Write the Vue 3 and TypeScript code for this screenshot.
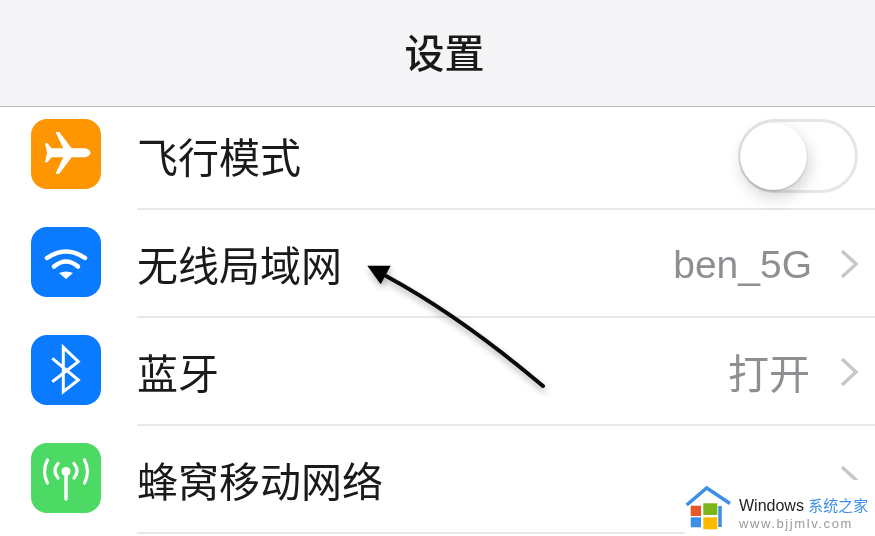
<script setup lang="ts">
interface Row {
  key: string
  label: string
  color: string
  value?: string
  cjkValue?: boolean
  chevron: boolean
  toggle?: boolean
}

const rows: Row[] = [
  { key: 'plane', label: '飞行模式', color: '#fe9503', chevron: false, toggle: true },
  { key: 'wifi', label: '无线局域网', color: '#0a7bff', value: 'ben_5G', chevron: true },
  { key: 'bluetooth', label: '蓝牙', color: '#0a7bff', value: '打开', cjkValue: true, chevron: true },
  { key: 'cell', label: '蜂窝移动网络', color: '#4cd964', chevron: true }
]
</script>

<template>
  <div class="page">
    <header class="nav">设置</header>
    <ul class="list">
      <li v-for="row in rows" :key="row.key" class="row">
        <span class="icon" :style="{ background: row.color }">
          <svg viewBox="0 0 70 70" width="70" height="70">
            <path
              v-if="row.key === 'plane'"
              fill="#fff"
              d="M59.5 33.8c0-2.6-3.5-4.5-7-4.5H40.7L28.3 13H24.5L32.3 29.3H20.7L16.5 24.3H14L16 33.8 14 43.3H16.5L20.7 38.3H32.3L24.5 54.7H28.3L40.7 38.3H52.5c3.5 0 7-1.9 7-4.5z"
            />
            <g v-else-if="row.key === 'wifi'" fill="none" stroke="#fff" stroke-width="4.5" stroke-linecap="round">
              <path d="M16 31Q35 18 54 31" />
              <path d="M23 39.5Q35 29.5 47 39.5" />
              <path d="M28 46L35 52 42 46Q35 43 28 46z" fill="#fff" stroke="none" />
            </g>
            <path
              v-else-if="row.key === 'bluetooth'"
              fill="none"
              stroke="#fff"
              stroke-width="3"
              d="M21.3 23.3L47.3 45 32.3 56.7V12.3L47.3 26.7 21.3 46.7"
            />
            <g v-else fill="none" stroke="#fff" stroke-width="3.2" stroke-linecap="round">
              <path d="M27 20.5Q21 27.5 27 35" />
              <path d="M43 20.5Q49 27.5 43 35" />
              <path d="M16.5 17Q10.5 28.5 16.5 40" />
              <path d="M53.5 17Q59.5 28.5 53.5 40" />
              <path d="M35 30V56" stroke-width="3.5" />
              <circle cx="35" cy="28.5" r="4.5" fill="#fff" stroke="none" />
            </g>
          </svg>
        </span>
        <div class="body">
          <span class="label">{{ row.label }}</span>
          <span v-if="row.value" class="value" :class="{ cjk: row.cjkValue }">{{ row.value }}</span>
          <svg v-if="row.chevron" class="chevron" viewBox="0 0 20 32" width="20" height="32">
            <path d="M3 3L17 16 3 29" fill="none" stroke="#c7c7cc" stroke-width="3.5" />
          </svg>
          <span v-if="row.toggle" class="toggle"><span class="knob"></span></span>
        </div>
      </li>
    </ul>

    <svg class="arrow" viewBox="0 0 210 150" width="210" height="150">
      <path d="M36 26Q110 66 193 136" fill="none" stroke="#0a0a0a" stroke-width="4" stroke-linecap="round" />
      <path d="M17.3 15.7H40.7L30.7 34.3z" fill="#000" />
    </svg>

    <div class="mark">
      <svg viewBox="0 0 50 50" width="50" height="50">
        <path d="M1.7 21L21.7 4 45 19.500M35 22V43" fill="none" stroke="#3d8fe6" stroke-width="3.5" />
        <rect x="5.7" y="21.7" width="10.3" height="10.3" fill="#e8572a" />
        <rect x="18.3" y="19.3" width="14" height="11.7" fill="#7cb518" />
        <rect x="5.7" y="33.3" width="10.3" height="10" fill="#3d8fe6" />
        <rect x="18.3" y="33.3" width="14" height="12" fill="#fdb900" />
      </svg>
      <div class="mark-text">
        <div class="mark-title">Windows <span>系统之家</span></div>
        <div class="mark-url">www.bjjmlv.com</div>
      </div>
    </div>
  </div>
</template>

<style>
html,
body {
  margin: 0;
  background: #fff;
}
</style>

<style scoped>
.page {
  position: relative;
  width: 875px;
  height: 536px;
  overflow: hidden;
  background: #fff;
  font-family: "Liberation Sans", "Noto Sans CJK SC", sans-serif;
  filter: blur(0.4px);
}
.nav {
  position: relative;
  z-index: 1;
  height: 102px;
  border-bottom: 1px solid #b9b9bd;
  background: #f5f5f7;
  display: flex;
  align-items: center;
  justify-content: center;
  padding: 0 0 4px 14px;
  font-size: 40px;
  font-weight: 500;
  color: #1a1a1a;
  font-family: "Noto Sans CJK SC", sans-serif;
}
.list {
  list-style: none;
  margin: -5px 0 0;
  padding: 0;
}
.row {
  display: flex;
  align-items: center;
  height: 108px;
  padding-left: 31px;
}
.icon {
  flex: none;
  width: 70px;
  height: 70px;
  border-radius: 16px;
  margin-right: 36px;
  margin-top: -4px;
}
.icon svg {
  display: block;
}
.body {
  flex: 1;
  height: 100%;
  box-sizing: border-box;
  border-bottom: 2px solid #e7e7e9;
  display: flex;
  align-items: center;
  padding-right: 16px;
}
.label {
  flex: 1;
  font-size: 41px;
  color: #1a1a1a;
  font-family: "Noto Sans CJK SC", sans-serif;
}
.value {
  font-size: 39px;
  color: #8e8e93;
  margin-right: 27px;
  margin-top: 3px;
}
.value.cjk {
  font-size: 41px;
  margin-right: 29px;
  margin-top: 0;
}
.chevron {
  margin-top: 2px;
}
.toggle {
  position: relative;
  width: 120px;
  height: 74px;
  box-sizing: border-box;
  border: 3px solid #e6e6e6;
  border-radius: 37px;
  margin-right: 1px;
  margin-top: 2px;
}
.knob {
  position: absolute;
  left: -1px;
  top: 1px;
  width: 67px;
  height: 67px;
  border-radius: 50%;
  background: #fff;
  box-shadow: 2px 7px 16px rgba(0, 0, 0, 0.18), 0 1px 2px rgba(0, 0, 0, 0.18);
}
.arrow {
  position: absolute;
  left: 350px;
  top: 250px;
  filter: drop-shadow(1px 4px 3px rgba(0, 0, 0, 0.3));
}
.mark {
  position: absolute;
  right: 0;
  bottom: 0;
  width: 190px;
  height: 56px;
  background: #fff;
  display: flex;
  align-items: flex-start;
  padding-top: 4px;
  box-sizing: border-box;
  gap: 4px;
}
.mark svg {
  flex: none;
}
.mark-text {
  padding-top: 10px;
}
.mark-title {
  font-size: 16px;
  color: #222;
  white-space: nowrap;
}
.mark-title span {
  color: #3d8fe6;
  font-size: 15px;
}
.mark-url {
  font-size: 13px;
  letter-spacing: 1.6px;
  color: #9a9a9a;
  margin-top: 1px;
}
</style>
